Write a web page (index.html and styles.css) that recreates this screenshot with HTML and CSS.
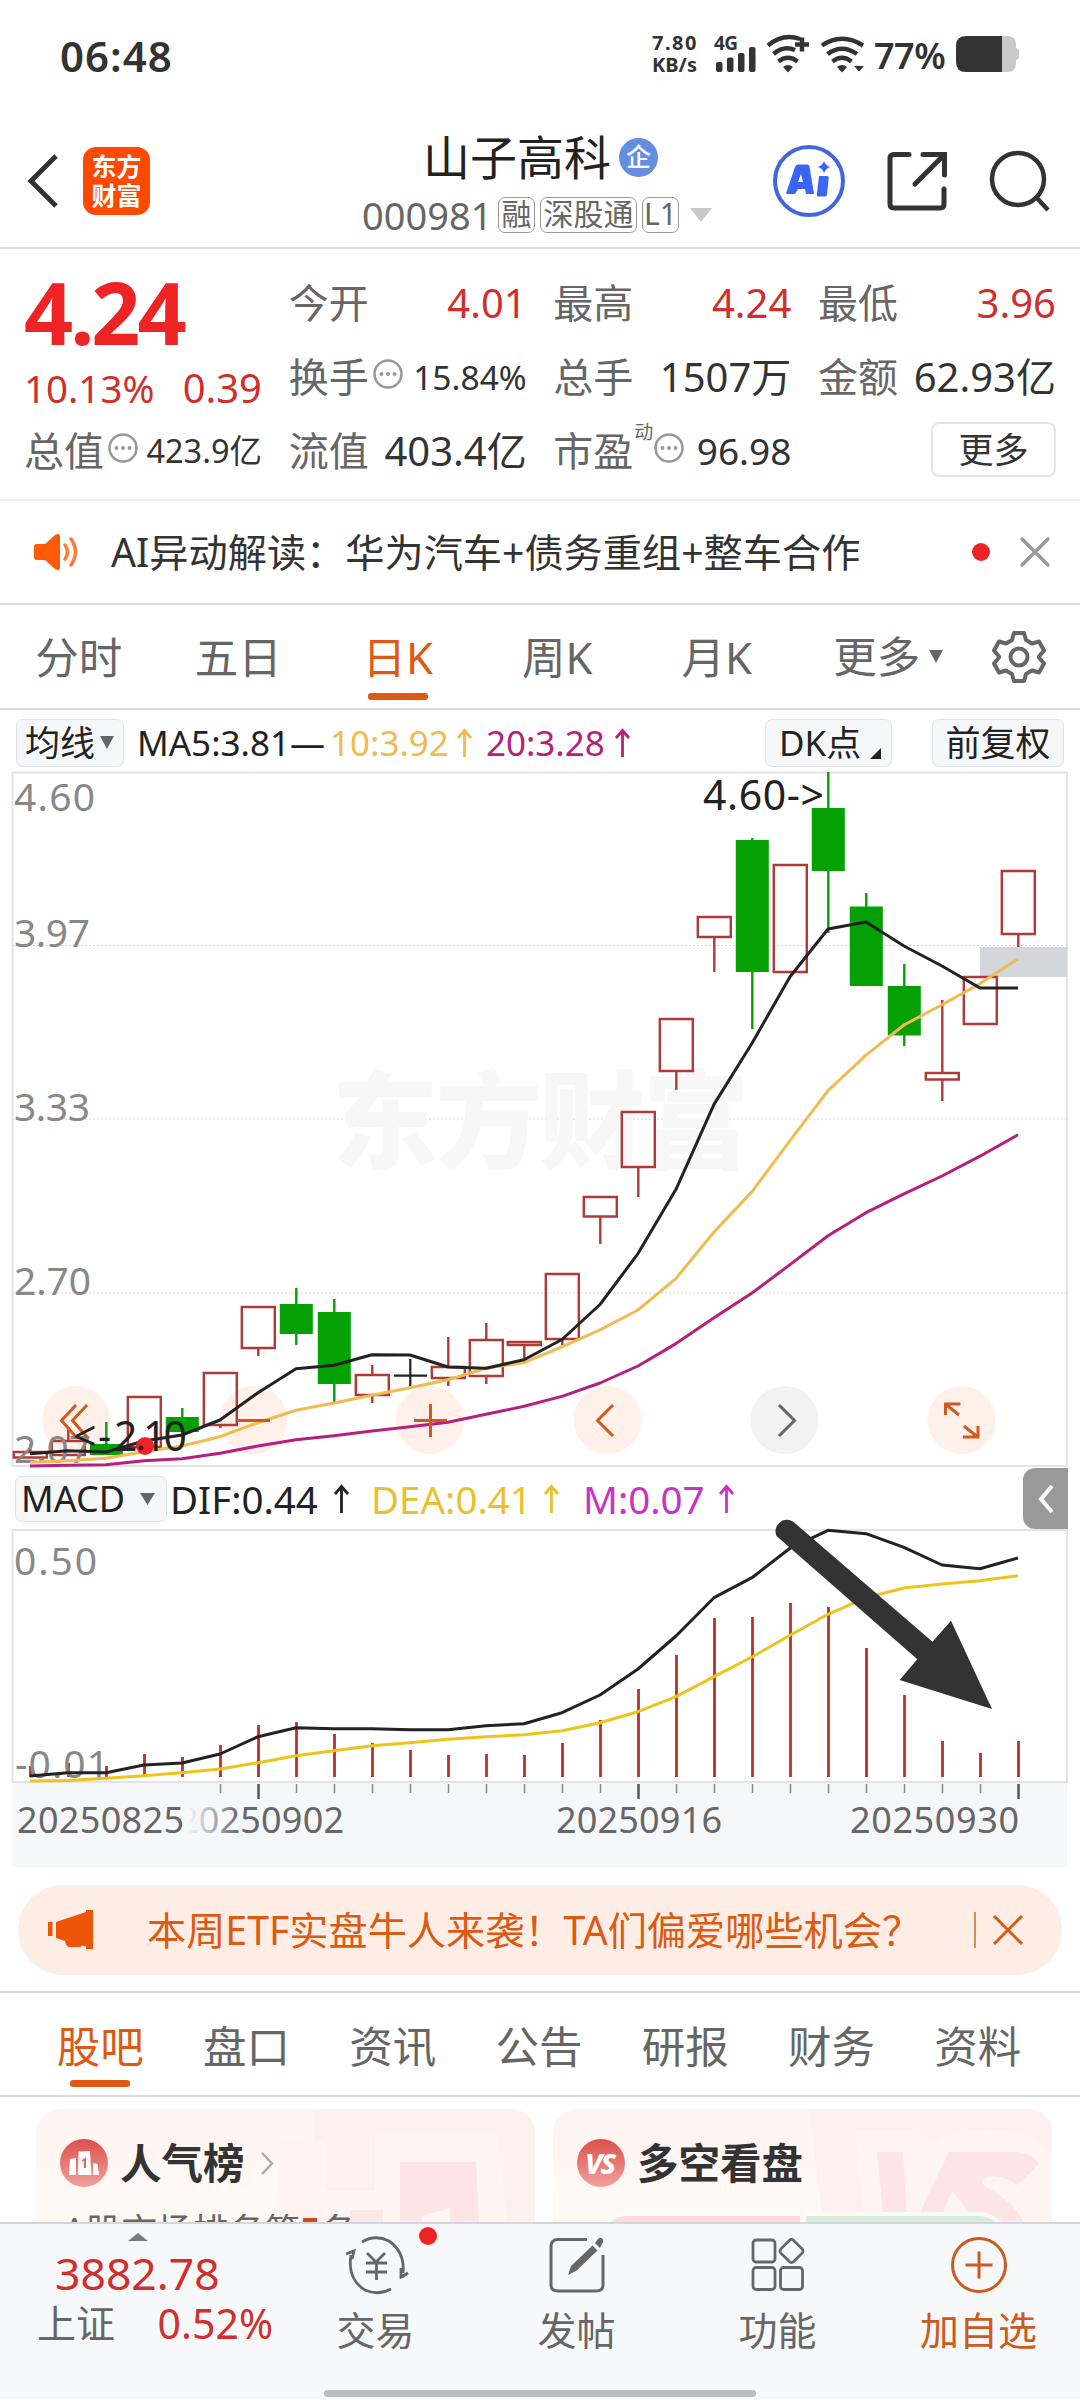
FILE: index.html
```html
<!DOCTYPE html>
<html lang="zh-CN">
<head>
<meta charset="utf-8">
<title>山子高科 000981</title>
<link rel="stylesheet" href="styles.css">
</head>
<body>
<div class="status">
  <span class="clock">06:48</span>
  <span class="net"><span>7.80</span><span>KB/s</span></span>
  <svg class="signals" width="156" height="44" viewBox="714 32 156 44">
    <text x="714" y="50" class="net-type" textLength="24">4G</text>
    <g fill="#333"><rect x="716" y="62" width="6.5" height="10" rx="2"/><rect x="727" y="57.500" width="6.500" height="14.500" rx="2"/><rect x="738" y="53" width="6.500" height="19" rx="2"/><rect x="749" y="47" width="6.500" height="25" rx="2"/>
    <path d="M783 67q5-4 10 0l-5 5.500zM837 67q5-4 10 0l-5 5.500zM854 66h10l-5 5.500z"/></g>
    <g fill="none" stroke="#333" stroke-width="4.500"><path d="M768 45.500Q783 33 800 39M773.500 54Q784 45 795 50M778.500 61.500Q788 54 797.500 61.500M795 44.500h14M802 37.500v14"/><path d="M822 45.500Q842 32 863 45.500M827.500 54Q842 43.500 857 54M832.500 61.500Q842 54 851.500 61.500"/></g>
  </svg>
  <span class="percent">77%</span>
  <svg width="64" height="36" viewBox="0 0 64 36"><path d="M10 0h41q9 0 9 9v3q3 1 3 3v6q0 2-3 3v3q0 9-9 9H10z" fill="#c9c9c9"/><path d="M10 0h36v36H10Q0 36 0 26V10Q0 0 10 0z" fill="#333"/></svg>
</div>

<header class="header">
  <div class="header-left">
    <svg width="32" height="56" viewBox="0 0 32 56"><path d="M29 3L4 28l25 25" fill="none" stroke="#333" stroke-width="5"/></svg>
    <div class="logo"><span>东方</span><span>财富</span></div>
  </div>
  <div class="stock">
    <div class="stock-name"><span>山子高科</span><i class="corp">企</i></div>
    <div class="stock-code"><span class="code">000981</span><b class="tag t1">融</b><b class="tag t3">深股通</b><b class="tag t1">L1</b><svg class="drop" width="22" height="14"><path d="M0 0h22L11 14z" fill="#c8c8c8"/></svg></div>
  </div>
  <div class="header-right">
    <svg width="72" height="72" viewBox="0 0 72 72"><circle cx="36" cy="36" r="34" fill="#fff" stroke="#4267dc" stroke-width="4"/><g fill="#3a66f8"><path fill-rule="evenodd" d="M25 19.500h9q2 0 2.500 2L41 49h-8l-1-5h-7l-3 5h-7.500q-2 0-1-2L22 22q1-2.500 3-2.500zM28 29l-3 8h5z"/><path d="M46 31h8q2 0 1.700 2L54 49.500q-.3 2-2 2h-7q-1.500 0-1.200-2z"/><path d="M51 16q2 5 6 6-4 1.500-6 6-1.500-4.500-6-6 4.500-1.500 6-6z"/></g></svg>
    <svg width="60" height="60" viewBox="0 0 60 60"><path d="M22 3.500H7q-4 0-4 4V53q0 4 4 4h46q4 0 4-4V38M36 3.500h21.500V24M57 4L28 33" fill="none" stroke="#333" stroke-width="5" stroke-linecap="round"/></svg>
    <svg width="62" height="62" viewBox="0 0 62 62"><g fill="none" stroke="#333" stroke-width="4.500"><circle cx="28" cy="29" r="26"/><path d="M45.500 46.500L58 60"/></g></svg>
  </div>
</header>

<section class="quote">
  <div class="quote-main"><div class="price">4.24</div><div class="pair red"><span class="v38">10.13%</span><span>0.39</span></div><div class="pair"><span class="label">总值<svg class="dots" viewBox="0 0 30 30"><use href="#more-dots"/></svg></span><span class="v32">423.9亿</span></div></div>
  <div class="quote-col"><div class="pair"><span class="label">今开</span><span class="red">4.01</span></div><div class="pair"><span class="label">换手<svg class="dots" viewBox="0 0 30 30"><use href="#more-dots"/></svg></span><span class="v34">15.84%</span></div><div class="pair"><span class="label">流值</span><span>403.4亿</span></div></div>
  <div class="quote-col"><div class="pair"><span class="label">最高</span><span class="red">4.24</span></div><div class="pair"><span class="label">总手</span><span>1507万</span></div><div class="pair"><span class="label">市盈<sup>动</sup><svg class="dots" viewBox="0 0 30 30"><use href="#more-dots"/></svg></span><span class="v36">96.98</span></div></div>
  <div class="quote-col"><div class="pair"><span class="label">最低</span><span class="red">3.96</span></div><div class="pair"><span class="label">金额</span><span>62.93亿</span></div><div class="pair end"><button class="more">更多</button></div></div>
  <svg class="defs" width="0" height="0"><defs><g id="more-dots"><circle cx="15" cy="15" r="13.500" fill="none" stroke="#999" stroke-width="2.500"/><g fill="#999"><circle cx="8.500" cy="15" r="2"/><circle cx="15" cy="15" r="2"/><circle cx="21.500" cy="15" r="2"/></g></g></defs></svg>
</section>

<section class="notice">
  <svg width="46" height="38" viewBox="0 0 46 38"><path d="M3 11h8L21 2q5-3 5 2v30q0 5-5 2l-10-9H3q-3 0-3-3V14q0-3 3-3z" fill="#ff5a0a"/><path d="M31 12q5 7 0 14M37 6q9 13 0 26" fill="none" stroke="#ff7a35" stroke-width="3.500" stroke-linecap="round"/></svg>
  <span class="notice-text">AI异动解读：华为汽车+债务重组+整车合作</span>
  <i class="dot"></i>
  <svg width="30" height="30" viewBox="0 0 30 30"><path d="M2 2l26 26M28 2L2 28" stroke="#999" stroke-width="3.500" stroke-linecap="round"/></svg>
</section>

<nav class="periods">
  <span>分时</span><span>五日</span><span class="on">日K</span><span>周K</span><span>月K</span><span class="periods-more">更多<svg width="14" height="13"><path d="M0 0h14L7 13z" fill="#666"/></svg></span>
  <svg class="gear" width="54" height="54" viewBox="0 0 54 54"><g fill="none" stroke="#666" stroke-width="4" stroke-linejoin="round"><path d="M22 3h10l2 7 6 3.500 7-2 5 9-5 6v1l5 6-5 9-7-2-6 3.500-2 7H22l-2-7-6-3.500-7 2-5-9 5-6v-1l-5-6 5-9 7 2 6-3.500z"/><circle cx="27" cy="27" r="8.500"/></g></svg>
</nav>

<div class="ma-row">
  <button class="chip c-ma">均线<svg width="14" height="13"><path d="M0 0h14L7 13z" fill="#666"/></svg></button>
  <span class="ma5">MA5:3.81—</span><span class="ma10">10:3.92</span><svg class="up y" width="15" height="28" viewBox="0 0 15 28"><use href="#up"/></svg><span class="ma20">20:3.28</span><svg class="up p" width="15" height="28" viewBox="0 0 15 28"><use href="#up"/></svg>
  <button class="chip c-dk">DK点<svg width="11" height="11"><path d="M11 0v11H0z" fill="#222"/></svg></button>
  <button class="chip c-fq">前复权</button>
  <svg class="defs" width="0" height="0"><defs><path id="up" d="M7.500 28V2M1 9l6.500-7.500L14 9" fill="none" stroke="currentColor" stroke-width="2.800"/></defs></svg>
</div>

<svg class="kline" width="1080" height="697" viewBox="0 771 1080 697">
  <g fill="none" stroke="#e2e3e4" stroke-width="2"><path d="M12.500 772.500H1067V1466H12.500z"/></g>
  <path d="M13 945.500H1066M13 1119H1066M13 1293H1066" stroke="#d8d8d8" stroke-width="1" stroke-dasharray="2 2"/>
  <text class="mark" x="332" y="1160" textLength="417">东方财富</text>
  <rect x="980" y="947" width="87" height="30" fill="#d3d7dc"/>
  <g class="axis"><text x="14" y="811" textLength="81">4.60</text><text x="14" y="947" textLength="76">3.97</text><text x="14" y="1121" textLength="76">3.33</text><text x="14" y="1294.500" textLength="77">2.70</text></g>
  <g fill="#fff0ea"><circle cx="76" cy="1420" r="34"/><circle cx="253.500" cy="1420" r="34"/><circle cx="430" cy="1420" r="34"/><circle cx="607.500" cy="1420" r="34"/><circle cx="784.500" cy="1420" r="34" fill="#f2f2f2"/><circle cx="961.500" cy="1420" r="34"/></g>
  <g fill="none" stroke="#b03a37" stroke-width="2.400">
    <path d="M13.800 1452h33v5.500h-33zM30.300 1445v7M51.800 1441h33v14h-33zM68.300 1430v11M127.800 1397h33v50h-33zM203.800 1373h33v52h-33zM220.300 1425v3M241.800 1307h33v41h-33zM258.300 1348v8M355.800 1375h33v20h-33zM372.300 1365v10M372.300 1395v8M431.800 1367h33v11h-33zM448.300 1337v30M448.300 1378v8M469.800 1340h33v36h-33zM486.300 1323v17M486.300 1376v8M507.800 1342h33v3h-33zM524.300 1346v12"/>
    <path d="M545.800 1274h33v65h-33zM562.300 1339v6M583.800 1197h33v19.500h-33zM600.300 1217v27M621.800 1112h33v55h-33zM638.300 1167v30M659.800 1019h33v52h-33zM676.300 1071v19M697.800 917h33v20h-33zM714.300 937v35M773.800 865h33v107h-33zM925.800 1073h33v6.500h-33zM942.300 1000v73M942.300 1080v21M963.800 977h33v47h-33zM1001.800 871h33v63h-33zM1018.300 934v13"/>
  </g>
  <path d="M89.800 1444h33v11h-33zM105.100 1422h2.400v22h-2.400zM165.800 1417h33v15h-33zM181.100 1408h2.400v9h-2.400zM279.800 1304h33v30h-33zM295.100 1288h2.400v57h-2.400zM317.800 1312h33v72h-33zM333.100 1299h2.400v103h-2.400zM735.800 840h33v132h-33zM751.100 838h2.400v191h-2.400zM811.800 808h33v63h-33zM827.100 772h2.400v161h-2.400zM849.800 906.500h33v79.500h-33zM865.100 893h2.400v14h-2.400zM887.800 986h33v49.500h-33zM903.100 964h2.400v82h-2.400z" fill="#04a004"/>
  <path d="M394 1375.700h33M410.300 1359v27" stroke="#222" stroke-width="2.200"/>
  <g class="axis"><text x="14" y="1463" textLength="77">2.07</text></g>
  <g fill="none" stroke-width="3" stroke-linejoin="round">
    <polyline stroke="#b5207e" points="30,1466 68,1465.300 106,1464.700 144,1460.700 182,1458.700 220,1453.300 258,1446 296,1439.700 334,1435.700 372,1431 410,1426.700 448,1422.300 486,1414.300 524,1406.300 562,1396.400 600,1383 638,1366 676,1343.600 714,1317.800 752,1293 790,1264.600 828,1235.700 866,1212.700 904,1193.900 942,1176 980,1156.200 1018,1134.700"/>
    <polyline stroke="#f0bb50" points="30,1462.300 68,1460.700 106,1458.300 144,1451.700 182,1446 220,1436.700 258,1422.700 296,1410.300 334,1403 372,1395.300 410,1387.700 448,1379.700 486,1368.300 524,1362.700 562,1346.800 600,1329.800 638,1310 676,1278.400 714,1232 752,1191.600 790,1140.600 828,1090.600 866,1055.200 904,1025 942,1004.700 980,983.600 1018,958.800"/>
    <polyline stroke="#222" points="30,1453.700 68,1450.700 106,1452 144,1441 182,1435 220,1420 258,1392.700 296,1368.700 334,1365.300 372,1354.700 410,1355 448,1367 486,1368.300 524,1359.700 562,1339.500 600,1304.500 638,1253.600 676,1189.300 714,1104.400 752,1043.300 790,976.700 828,929 866,922 904,946 942,966 980,988 1018,988"/>
  </g>
  <g fill="none" stroke="#cf5a1b" stroke-width="3"><path d="M76 1405l-14.500 15.500L76 1437M87 1405l-14.500 15.500L87 1437M237 1420.500h33M414 1420.500h33M430.500 1404v33M613 1405l-15.500 15.500L613 1436M945.500 1415v-11h15M946 1404.500l13 10.500M978 1426v11h-15M977 1436.500l-13-10.500"/><path d="M779 1405l15.500 15.500L779 1436" stroke="#666"/></g>
  <g class="callout"><text x="703" y="809.500" textLength="121">4.60-&gt;</text><text x="73" y="1450.500">&lt;<tspan x="98">-</tspan><tspan x="114" textLength="73">2.10</tspan></text></g>
  <circle cx="145" cy="1446" r="9" fill="#ec2524"/><circle cx="141" cy="1448" r="2.500" fill="#4a1010"/>
</svg>

<div class="macd-row">
  <button class="chip c-macd">MACD<svg width="15" height="12"><path d="M0 0h15L7.500 12z" fill="#666"/></svg></button>
  <span class="dif">DIF:0.44</span><svg class="up k" width="15" height="28" viewBox="0 0 15 28"><use href="#up"/></svg><span class="dea">DEA:0.41</span><svg class="up g" width="15" height="28" viewBox="0 0 15 28"><use href="#up"/></svg><span class="m">M:0.07</span><svg class="up m" width="15" height="28" viewBox="0 0 15 28"><use href="#up"/></svg>
  <span class="collapse"><svg width="16" height="28" viewBox="0 0 16 28"><path d="M14 1L3 14l11 13" fill="none" stroke="#fff" stroke-width="4"/></svg></span>
</div>

<svg class="macd" width="1080" height="339" viewBox="0 1529 1080 339">
  <defs><linearGradient id="fade" x1="188" x2="240" y1="0" y2="0" gradientUnits="userSpaceOnUse"><stop offset="0" stop-color="#666" stop-opacity="0"/><stop offset="1" stop-color="#666"/></linearGradient></defs>
  <rect x="12" y="1783" width="1055" height="84" fill="#f6f7f9"/>
  <path d="M12.500 1530H1067V1782H12.500z" fill="none" stroke="#e2e3e4" stroke-width="2"/>
  <path stroke="#bd302b" stroke-width="2.800" d="M30.500 1766v11M68.500 1763v14M106.500 1766v11M144.500 1754v23M182.500 1757v20M220.500 1745v32M258.500 1725v52M296.500 1722v55M334.500 1734v43M372.500 1743v34M410.500 1750v27M448.500 1755v22M486.500 1754v23M524.500 1755v22M562.500 1743v34M600.500 1720v57M638.500 1689v88M676.500 1655v122M714.500 1618v159M752.500 1617v160M790.500 1603v174M828.500 1607v170M866.500 1648v129M904.500 1695v82M942.500 1741v36M980.500 1753v24M1018.500 1741v36"/>
  <path stroke="#888" stroke-width="1.500" d="M220.500 1784v9M296.500 1784v9M334.500 1784v9M372.500 1784v9M410.500 1784v9M448.500 1784v9M486.500 1784v9M524.500 1784v9M562.500 1784v9M600.500 1784v9M676.500 1784v9M714.500 1784v9M752.500 1784v9M790.500 1784v9M828.500 1784v9M866.500 1784v9M904.500 1784v9M942.500 1784v9M980.500 1784v9"/>
  <path stroke="#555" stroke-width="2.500" d="M258.500 1784v15M638.500 1784v15M1018.500 1784v15"/>
  <g class="axis"><text x="14" y="1575" textLength="83">0.50</text><text x="15" y="1778" textLength="94">-0.01</text></g>
  <g fill="none" stroke-width="3" stroke-linejoin="round">
    <polyline stroke="#edc51a" points="30,1781 68,1780.600 106,1778.300 144,1775.700 182,1772.700 220,1769 258,1762.700 296,1755.700 334,1750.700 372,1745.700 410,1742.700 448,1739.300 486,1736.700 524,1734.700 562,1730.700 600,1722.700 638,1711.700 676,1696.700 714,1676.700 752,1657 790,1635.300 828,1614.300 866,1597.700 904,1588 942,1584 980,1580.700 1018,1575.700"/>
    <polyline stroke="#222" points="30,1776 68,1772.700 106,1772.700 144,1765 182,1763 220,1754 258,1736.700 296,1727.700 334,1728.700 372,1728.700 410,1729.700 448,1729.700 486,1725.700 524,1723.700 562,1712.700 600,1695 638,1669 676,1636 714,1597.700 752,1577.700 790,1548.300 828,1530.300 866,1533.700 904,1547.300 942,1565 980,1568.700 1018,1558"/>
  </g>
  <g class="dates"><text x="17" y="1832.500" textLength="167">20250825</text><text x="178" y="1832.500" textLength="166" fill="url(#fade)">20250902</text><text x="556" y="1832.500" textLength="166">20250916</text><text x="850" y="1832.500" textLength="169">20250930</text></g>
  <path d="M776.500 1536A11.500 11.500 0 0 1 793 1521.500L932.500 1641.700 951 1620.700 992 1709 899.600 1680 917.300 1659.300z" fill="#333"/>
</svg>

<div class="banner">
  <svg width="47" height="40" viewBox="0 0 47 40"><path d="M0 12h4.500v14H0zM8 12L38 2V0h7v39h-7v-2.500l-4-1Q33 37 31 37h-9q-4 0-5-6l-9-3z" fill="#ec5506"/></svg>
  <span class="banner-text">本周ETF实盘牛人来袭！TA们偏爱哪些机会？</span>
  <i class="bar"></i>
  <svg width="32" height="32" viewBox="0 0 32 32"><path d="M2 2l28 28M30 2L2 30" stroke="#dd5a14" stroke-width="3"/></svg>
</div>

<nav class="sections"><span class="on">股吧</span><span>盘口</span><span>资讯</span><span>公告</span><span>研报</span><span>财务</span><span>资料</span></nav>

<main class="cards">
  <section class="card">
    <svg class="art" width="499" height="114" viewBox="0 0 499 114"><path d="M290 0h209v114H278V0z" fill="#fdf1f0"/><path d="M243 32h48v-32h-1v114h-47z" fill="#fff3f1"/><path d="M278 114V82h61V24h122l10 90z" fill="#fff5f2"/><path d="M364 53h76l3 61h-79z" fill="#fce5e4"/><path d="M386 107l28-8v15h-28z" fill="#fff5f2"/><path d="M314 101h33v13h-33z" fill="#fce9e7"/></svg>
    <div class="card-title"><svg width="48" height="48" viewBox="0 0 48 48"><defs><linearGradient id="badge" x1="0" x2="0" y1="0" y2="1"><stop offset="0" stop-color="#dc4f4a"/><stop offset="1" stop-color="#f2a19d"/></linearGradient></defs><circle cx="24" cy="24" r="24" fill="url(#badge)"/><path d="M10 20l6-1v17H9zM18.500 12.500L30 12l1.500 24H18zM33 24l4.500 1L39 36h-6z" fill="#fff"/><path d="M22 22l3-2v9" fill="none" stroke="#dc6b66" stroke-width="2"/></svg><h3>人气榜</h3><svg width="14" height="23" viewBox="0 0 14 23"><path d="M2 1l10 10.500L2 22" fill="none" stroke="#aaa" stroke-width="2.500"/></svg></div>
    <p class="rank">A股市场排名第<b>5</b>名</p>
  </section>
  <section class="card">
    <svg class="art" width="499" height="114" viewBox="0 0 499 114"><path d="M256 0h243v114H270z" fill="#fdf1ef"/><path d="M302 22h62l16 12q20-14 62-14 40 5 57 25v69H312z" fill="#fef5f3"/><path d="M324 43h26l4 62h12l30-62h70q15 3 20 12l-22 21q-12-9-27-9-10 2-6 10 30 15 40 37h-46l-26-32-14 32h-54z" fill="#fce5e4"/></svg>
    <div class="card-title"><svg width="48" height="48" viewBox="0 0 48 48"><circle cx="24" cy="24" r="24" fill="url(#badge)"/><text x="8" y="35" class="vs" textLength="31">VS</text></svg><h3>多空看盘</h3></div>
    <div class="versus"><i class="long"></i><i class="short"></i></div>
  </section>
</main>

<footer class="bottom">
  <div class="index"><svg width="20" height="8"><path d="M10 0l10 8H0z" fill="#77797c"/></svg><div class="points">3882.78</div><div class="change"><span>上证</span><span class="red">0.52%</span></div></div>
  <a class="item"><svg width="62" height="60" viewBox="0 0 62 60"><g fill="none" stroke="#666" stroke-width="2.800"><path d="M17 7Q30-1 44 6 60 17 58 38M46 54Q33 61 20 55 2 44 6 20M1 19l8-3-2 8M57 42l6-4-7 4V33M22 18l9 9 9-9M21 28h21M21 37h21M31.500 27v18"/></g></svg><i class="dot"></i><span>交易</span></a>
  <a class="item"><svg width="56" height="60" viewBox="0 0 56 60"><path d="M38 4.500H9q-7 0-7 7V50q0 6 7 6h38q7 0 7-6V20" fill="none" stroke="#666" stroke-width="3"/><path d="M49 4q2-2 4-.5 2 2 .500 4.500L51 13l-5-5zM43.500 10.500l5 5L27 36l-8 4 3-9z" fill="#666"/></svg><span>发帖</span></a>
  <a class="item"><svg width="54" height="54" viewBox="0 0 54 54"><g fill="none" stroke="#666" stroke-width="2.800"><rect x="2" y="2" width="22" height="22" rx="3"/><rect x="2" y="29.500" width="22" height="22" rx="3"/><rect x="29.500" y="29.500" width="22" height="22" rx="3"/><rect x="31.500" y="4" width="18" height="18" rx="3" transform="rotate(45 40.500 13)"/></g></svg><span>功能</span></a>
  <a class="item add"><svg width="58" height="58" viewBox="0 0 58 58"><g fill="none" stroke="#cc5a1e" stroke-width="3"><circle cx="29" cy="29" r="26.500"/><path d="M15.500 29h27M29 15.500v27"/></g></svg><span>加自选</span></a>
  <i class="home"></i>
</footer>
</body>
</html>
```
FILE: styles.css
```css
* { box-sizing: border-box; }
body { margin: 0; width: 1080px; height: 2400px; overflow: hidden; background: #fff; color: #333; font-family: "Noto Sans", "Noto Sans CJK SC", sans-serif; display: flex; flex-direction: column; white-space: nowrap; }
body > * { flex: none; }
svg { display: block; flex: none; overflow: visible; }
i, b { font-style: normal; font-weight: 400; }
button { font: inherit; color: inherit; padding: 0; margin: 0; }
.defs { position: absolute; }
.red { color: #d02f2c; }
.dot { width: 18px; height: 18px; border-radius: 50%; background: #ee2424; }

.status { height: 112px; padding: 32px 0 0 60px; display: flex; align-items: flex-start; }
.clock { width: 592px; font-size: 42px; line-height: 47px; font-weight: 600; letter-spacing: 1px; }
.net { width: 62px; display: flex; flex-direction: column; font-size: 20px; line-height: 22px; font-weight: 700; }
.net span:first-child { letter-spacing: 1.500px; }
.net-type { font-size: 19px; font-weight: 700; fill: #333; }
.percent { width: 82px; margin-left: 4px; font-size: 36px; line-height: 48px; font-weight: 600; letter-spacing: -.5px; }
.status > svg:last-child { margin-top: 4px; }

.header { height: 137px; border-bottom: 2px solid #d8dcdc; display: grid; grid-template-columns: 364px 408px 1fr; align-items: start; }
.header-left { display: flex; align-items: center; gap: 24px; padding: 35px 0 0 27px; }
.logo { width: 67px; height: 68px; border-radius: 13px; background: #ff4800; color: #fff; display: flex; flex-direction: column; align-items: center; justify-content: center; font-size: 25px; line-height: 29px; font-weight: 700; }
.stock { padding-top: 21px; }
.stock-name { display: flex; align-items: center; gap: 8px; padding-left: 59px; height: 48px; font-size: 47px; line-height: 48px; color: #222; }
.corp { width: 39px; height: 39px; border-radius: 50%; background: #658ee0; color: #fff; font-size: 25px; line-height: 37px; text-align: center; font-weight: 500; }
.stock-code { display: flex; align-items: center; height: 36px; margin: 16px 0 0 -2px; color: #666; }
.code { width: 136px; font-size: 38px; line-height: 36px; }
.tag { height: 36px; border: 1.500px solid #999; border-radius: 7px; font-size: 30px; line-height: 32px; text-align: center; margin-right: 5px; }
.t1 { width: 37px; }
.t3 { width: 97px; }
.drop { margin-left: 6px; }
.header-right { display: flex; align-items: center; padding: 33px 0 0 1px; }
.header-right svg:nth-child(2) { margin-left: 42px; }
.header-right svg:nth-child(3) { margin-left: 43px; }

.quote { height: 252px; padding: 17px 24px 0 24px; display: grid; grid-template-columns: repeat(4, 238px); justify-content: space-between; border-bottom: 2px solid #eef0f0; }
.pair { height: 74px; display: flex; align-items: center; justify-content: space-between; font-size: 40px; line-height: 74px; }
.pair.end { justify-content: flex-end; }
.label { display: flex; align-items: center; color: #666; }
.label sup { font-size: 19px; line-height: 20px; height: 58px; margin: 0 0 0 1px; align-self: center; }
.dots { width: 30px; height: 30px; margin: -6px 0 0 4px; }
sup + .dots { margin-left: 1px; }
.quote-main .price { height: 74px; line-height: 92px; font-size: 86px; font-weight: 700; letter-spacing: -3px; color: #ee2424; }
.quote-main .red { padding-top: 22px; }
.v38 { font-size: 38.500px; } .v36 { font-size: 37px; } .v34 { font-size: 33.500px; } .v32 { font-size: 32.500px; }
.more { width: 125px; height: 55px; border: 2px solid #e4e6e6; border-radius: 8px; background: #fff; font-size: 35px; line-height: 47px; margin-bottom: 3px; }

.notice { height: 104px; border-bottom: 2px solid #d8dadc; display: flex; align-items: center; padding: 0 30px 0 34px; }
.notice-text { margin: -4px 0 0 31px; width: 861px; font-size: 39.200px; }
.notice .dot { margin-right: 30px; }

.periods { height: 105px; border-bottom: 2px solid #d8dadc; display: flex; align-items: center; color: #666; font-size: 43.500px; line-height: 60px; }
.periods span { position: relative; left: -1px; width: 159.500px; height: 100%; line-height: 105px; text-align: center; }
.periods .on, .sections .on { color: #dc5a12; }
.on::after { content: ""; position: absolute; left: 50%; bottom: 8px; width: 60px; height: 7px; margin-left: -30px; border-radius: 3px; background: #dc5a12; }
.periods .periods-more { display: flex; align-items: center; justify-content: center; gap: 9px; padding-left: 24px; }
.gear { margin-left: 35px; }

.ma-row { height: 61px; padding: 4px 16px 0 16px; display: flex; align-items: center; font-size: 35px; line-height: 44px; color: #222; }
.chip { height: 48px; border: 1px solid #dfe3e6; border-radius: 7px; background: #f6f7f9; color: #222; display: flex; align-items: center; font-size: 35px; line-height: 40px; }
.c-ma { width: 108px; padding-left: 8px; gap: 5px; }
.ma5 { margin-left: 13px; width: 193px; }
.ma10, .y { color: #f0bb50; } .ma20, .p { color: #b5207e; }
.y, .p { margin-left: 8px; }
.ma20 { margin-left: 14px; width: 121px; }
.c-dk { width: 127px; margin-left: auto; padding-left: 13px; }
.c-dk svg { margin: 22px 0 0 9px; }
.c-fq { width: 132px; margin-left: 40px; justify-content: center; }

.mark { font-family: "Noto Sans CJK SC", sans-serif; font-weight: 900; font-size: 106px; fill: #f7f7f7; }
.axis text { font-size: 39px; fill: #888; }
.callout text { font-size: 41px; fill: #222; }
.dates text { font-size: 36px; } .dates { fill: #666; }

.macd-row { height: 61px; padding-left: 15px; display: flex; align-items: center; font-size: 38.500px; line-height: 44px; color: #222; }
.c-macd { width: 152px; padding-left: 5px; gap: 15px; font-size: 36px; height: 46px; }
.dif { margin-left: 3px; width: 164px; }
.dea { margin-left: 22px; width: 173px; font-size: 38.500px; } .m { font-size: 38.500px; }
.dea, .g { color: #e8c22e; } .m { color: #c832c8; }
span.m { margin-left: 24px; width: 136px; }
.collapse { margin: 0 12px 0 auto; width: 45px; height: 61px; border-radius: 12px 0 0 12px; background: #999; display: flex; align-items: center; justify-content: center; }
.macd, .kline { position: relative; }

.banner { margin: 17px 18px 16px; height: 90px; border-radius: 45px; background: #fdede5; display: flex; align-items: center; padding: 0 38px 0 30px; color: #dc5a12; }
.banner-text { margin: -4px 0 0 52px; width: 827px; font-size: 39.200px; }
.bar { width: 2px; height: 36px; background: #dc8a5a; margin-right: 16px; }

.sections { height: 106px; border-top: 2px solid #d8dadc; border-bottom: 2px solid #d8dadc; padding: 0 29px 0 27px; display: flex; color: #666; font-size: 43.500px; line-height: 106px; }
.sections span { flex: 1; text-align: center; position: relative; }

.cards { height: 125px; padding: 12px 28px 0 36px; display: flex; gap: 18px; overflow: hidden; }
.card { position: relative; width: 499px; height: 150px; border-radius: 24px 24px 0 0; background: linear-gradient(#fff4f1, #fff9f6 60%); overflow: hidden; }
.art { position: absolute; left: 0; top: 0; }
.card-title { position: relative; display: flex; align-items: center; height: 48px; margin: 30px 0 0 24px; }
.card h3 { margin: 0 15px 0 12px; font-size: 41.500px; line-height: 48px; font-weight: 600; }
.vs { fill: #fff; font-size: 29px; font-weight: 800; font-style: italic; }
.rank { position: relative; margin: 19px 0 0 27px; font-size: 35.700px; line-height: 48px; color: #666; }
.rank b { color: #cc4a1e; font-weight: 700; }
.versus { position: relative; width: 412px; height: 60px; margin: 25px 0 0 44px; border: 4px solid #fffaf8; border-bottom: 0; border-radius: 30px 30px 0 0; display: flex; gap: 6px; background: #fffaf8; overflow: hidden; }
.long { flex: 1; background: #fbdcda; } .short { flex: 1; background: #d7eddd; }

.bottom { position: relative; height: 177px; border-top: 2px solid #d4d6d9; background: #f7f8fa; display: grid; grid-template-columns: 275px repeat(4, 201px); align-items: start; font-size: 39px; color: #666; }
.index svg { margin: 9px 0 0 128px; }
.points { margin: 7px 0 0 55px; font-size: 44.500px; line-height: 50px; color: #d02f2c; }
.change { display: flex; justify-content: space-between; padding: 0 2px 0 37px; line-height: 50px; }
.change .red { font-size: 41px; }
.item { position: relative; height: 150px; display: flex; flex-direction: column; align-items: center; }
.item svg { margin: auto 0; }
.item span { height: 50px; line-height: 50px; margin-bottom: 19px; }
.item .dot { position: absolute; left: 144px; top: 3px; }
.add { color: #cc5a1e; }
.home { position: absolute; left: 324px; bottom: 2px; width: 432px; height: 7px; border-radius: 4px; background: #bcbdbf; }
```
